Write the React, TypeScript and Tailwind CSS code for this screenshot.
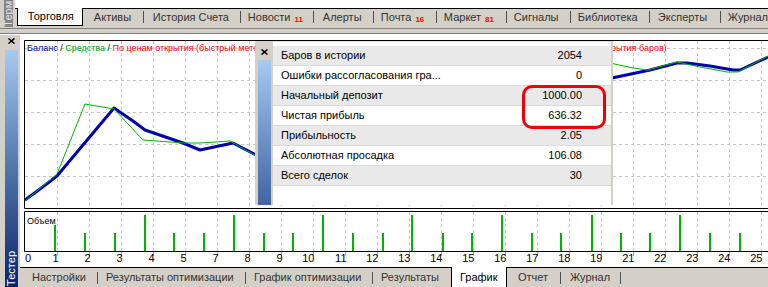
import React from 'react';

interface TabItem {
  label: string;
  badge?: string;
  cls: string;
}

// tabs of the terminal window (top)
const TOP_TABS: TabItem[] = [
  { label: 'Активы', cls: 'w-[60px] pl-[11px]' },
  { label: 'История Счета', cls: 'w-[96px] pl-[9px]' },
  { label: 'Новости', badge: '11', cls: 'w-[72px] pl-[7px]' },
  { label: 'Алерты', cls: 'w-[59px] pl-[9px]' },
  { label: 'Почта', badge: '16', cls: 'w-[62px] pl-[7px]' },
  { label: 'Маркет', badge: '81', cls: 'w-[69px] pl-[7px]' },
  { label: 'Сигналы', cls: 'w-[63px] pl-[7px]' },
  { label: 'Библиотека', cls: 'w-[78px] pl-[7px]' },
  { label: 'Эксперты', cls: 'w-[70px] pl-[8px]' },
];

// tabs of the tester window (bottom)
const LEFT_TABS: TabItem[] = [
  { label: 'Настройки', cls: 'w-[77px] pl-[12px]' },
  { label: 'Результаты оптимизации', cls: 'w-[147px] pl-[8px]' },
  { label: 'График оптимизации', cls: 'w-[126px] pl-[8px]' },
];

const RIGHT_TABS: TabItem[] = [
  { label: 'Отчет', cls: 'w-[53px] pl-[11px]' },
  { label: 'Журнал', cls: 'w-[59px] pl-[9px]' },
];

const ROWS = [
  ['Баров в истории', '2054'],
  ['Ошибки рассогласования гра...', '0'],
  ['Начальный депозит', '1000.00'],
  ['Чистая прибыль', '636.32'],
  ['Прибыльность', '2.05'],
  ['Абсолютная просадка', '106.08'],
  ['Всего сделок', '30'],
];

const GRID_X = Array.from({ length: 23 }, (_, k) => 57 + 32 * k);
const GRID_Y = [48, 80, 112, 144, 176];
const AXIS = ['1', '2', '3', '4', '5', '7', '8', '9', '10', '11', '12', '13', '14', '15', '16', '17', '18', '19', '21', '22', '23', '24', '25'];

const BARS: [number, number][] = [
  [54, 225], [84, 233], [114, 233], [144, 215], [173, 233], [203, 233], [233, 215], [263, 233],
  [292, 233], [322, 215], [352, 233], [382, 233], [411, 215], [442, 233], [471, 233], [501, 215],
  [531, 233], [560, 233], [591, 215], [620, 233], [649, 233], [679, 215], [709, 233], [739, 233],
];

const BALANCE =
  'M25,200 L40,189 L57,176 L114,108 L133,121 L145,130 L183,143 L200,150 L233,143 L256,155 L330,140 L450,110 L560,95 L612,78 L650,70 L677,63 L687,63 L710,66 L733,70 L740,70 L768,57';
const EQUITY =
  'M25,201 L57,174 L85,104 L114,109 L143,140 L183,143 L200,143 L230,141 L258,157 L330,135 L450,100 L560,80 L610,63 L633,68 L648,70 L677,62 L700,67 L727,72 L738,72 L768,56';

function CloseX() {
  return (
    <svg width="7" height="6" viewBox="0 0 7 6">
      <path d="M0.5 0.5 L6.5 5.5 M6.5 0.5 L0.5 5.5" stroke="#000" strokeWidth="1.6" fill="none" />
    </svg>
  );
}

function Sep() {
  return <div className="w-px h-[12px] bg-[#505050]" />;
}

function Tab({ item }: { item: TabItem }) {
  return (
    <div className={`flex items-center whitespace-nowrap text-[#333] ${item.cls}`}>
      <span>{item.label}</span>
      {item.badge && (
        <span className="ml-[4px] text-[8px] font-bold text-[#ff0000] mt-[6px]">{item.badge}</span>
      )}
    </div>
  );
}

function SideLabel({ text, className }: { text: string; className: string }) {
  return (
    <div className={`flex items-end justify-center overflow-hidden ${className}`}>
      <span className="[writing-mode:vertical-rl] rotate-180 whitespace-nowrap leading-[13px]">{text}</span>
    </div>
  );
}

function ChartDrawing() {
  return (
    <svg className="absolute inset-0" width="748" height="232" viewBox="20 35 748 232">
      {/* grid */}
      {GRID_X.map((x) => (
        <g key={x} stroke="#c4c4c4" strokeDasharray="3 3">
          <line x1={x + 0.5} y1={41} x2={x + 0.5} y2={208} />
          <line x1={x + 0.5} y1={212} x2={x + 0.5} y2={251} />
          <line x1={x + 0.5} y1={252} x2={x + 0.5} y2={256} strokeDasharray="none" stroke="#a0a0a0" />
        </g>
      ))}
      {GRID_Y.map((y) => (
        <line key={y} x1={25} y1={y + 0.5} x2={768} y2={y + 0.5} stroke="#c4c4c4" strokeDasharray="3 3" />
      ))}

      {/* curves */}
      <path d={BALANCE} stroke="#0000aa" strokeWidth="3" fill="none" strokeLinejoin="round" />
      <path d={EQUITY} stroke="#00b400" strokeWidth="1" fill="none" />

      {/* volume */}
      {BARS.map(([x, y]) => (
        <rect key={x} x={x} y={y} width="2" height={251 - y} fill="#00b400" />
      ))}
      <text x="27" y="224" fontSize="9" fill="#000" fontFamily="'Liberation Sans', Arial, sans-serif">
        Объем
      </text>

      {/* frames */}
      <path d="M768,40.5 H24.5 V208.5 H768" stroke="#000" fill="none" />
      <path d="M768,211.5 H24.5 V251.5 H768" stroke="#000" fill="none" />

      {/* axis */}
      <g fontSize="11" fill="#000" fontFamily="'Liberation Sans', Arial, sans-serif">
        <text x="25" y="262">0</text>
        {AXIS.map((label, i) => (
          <text key={label} x={GRID_X[i] + 1.5} y="262" textAnchor="end">
            {label}
          </text>
        ))}
      </g>
    </svg>
  );
}

function ResultsPanel() {
  return (
    <div className="absolute left-[235px] top-[6px] w-[358px] h-[164px] bg-[#d4d0c8] flex">
      <div className="w-[18px] flex flex-col">
        <div className="h-[19px] flex justify-center pt-[8px]">
          <CloseX />
        </div>
        <div className="ml-[3px] w-[13px] flex-1 bg-linear-to-b from-[#a6caf0] to-[#4264a4]" />
      </div>
      <div className="relative w-[338px] bg-white pt-[4px] border-t border-[#e0e0e0]">
        {ROWS.map(([label, value], i) => (
          <div
            key={label}
            className={`flex h-[20px] items-center justify-between pl-[8px] pr-[29px] border-b border-[#dadada] ${
              i % 2 === 0 ? 'bg-[#e9e9e9]' : 'bg-white'
            }`}
          >
            <span>{label}</span>
            <span>{value}</span>
          </div>
        ))}
        <div className="absolute left-[249px] top-[43px] w-[84px] h-[44px] rounded-[10px] border-[3px] border-[#f20000]" />
      </div>
    </div>
  );
}

export default function App() {
  return (
    <div className="w-[768px] h-[287px] overflow-hidden bg-[#d4d0c8] font-['Liberation_Sans',Arial,sans-serif] text-[11px] text-black">
      {/* Терминал: вкладки */}
      <div className="flex h-[28px]">
        <div className="w-[5px]" />
        <SideLabel text="Терминал" className="w-[13px] h-[27px] bg-[#848484] text-[#e6e6e6]" />
        <div className="w-[2px]" />
        <div className="flex-1 flex flex-col">
          <div className="h-[8px] bg-white" />
          <div className="flex h-[20px]">
            <div className="w-[2px] border-t border-black" />
            <div className="w-[66px] h-[18px] flex items-center pl-[10px] bg-white border-x border-b border-black">
              Торговля
            </div>
            <div className="flex-1 flex items-center pb-[3px] border-t border-black overflow-hidden">
              {TOP_TABS.map((t) => (
                <React.Fragment key={t.label}>
                  <Tab item={t} />
                  <Sep />
                </React.Fragment>
              ))}
              <div className="pl-[7px] whitespace-nowrap text-[#333]">Журнал</div>
            </div>
          </div>
        </div>
      </div>

      {/* разделитель */}
      <div className="h-[6px] border-y border-[#808080]" />
      <div className="h-px bg-white" />

      {/* Тестер */}
      <div className="flex h-[252px]">
        <div className="w-[5px]" />
        <div className="w-[13px] flex flex-col">
          <div className="h-[15px] flex justify-center pt-[3px]">
            <CloseX />
          </div>
          <SideLabel
            text="Тестер"
            className="flex-1 pb-[1px] bg-linear-to-b from-[#a6caf0] to-[#0a246a] text-white"
          />
        </div>
        <div className="w-[2px]" />
        <div className="flex-1 flex flex-col min-w-0">
          <div className="relative flex-1 bg-white overflow-hidden">
            <ChartDrawing />
            {/* легенда: середина закрыта окном результатов */}
            <div className="relative flex pl-[7px] pt-[8px] text-[9px] leading-[11px] whitespace-nowrap">
              <div className="w-[228px] overflow-hidden">
                <span className="text-[#0000aa]">Баланс</span>
                <span> / </span>
                <span className="text-[#00a000]">Средства</span>
                <span> / </span>
                <span className="text-[#ff0000]">По ценам открытия (быстрый метод</span>
              </div>
              <div className="w-[356px]" />
              <span className="text-[#ff0000]">рытия баров)</span>
            </div>
            <ResultsPanel />
          </div>

          {/* вкладки тестера */}
          <div className="flex h-[20px]">
            <div className="flex items-center border-t border-black">
              {LEFT_TABS.map((t) => (
                <React.Fragment key={t.label}>
                  <Tab item={t} />
                  <Sep />
                </React.Fragment>
              ))}
              <Tab item={{ label: 'Результаты', cls: 'w-[78px] pl-[8px]' }} />
            </div>
            <div className="w-[56px] flex items-center pl-[8px] bg-white border-x border-black">График</div>
            <div className="flex-1 flex items-center border-t border-black">
              {RIGHT_TABS.map((t) => (
                <React.Fragment key={t.label}>
                  <Tab item={t} />
                  <Sep />
                </React.Fragment>
              ))}
            </div>
          </div>
        </div>
      </div>
    </div>
  );
}
